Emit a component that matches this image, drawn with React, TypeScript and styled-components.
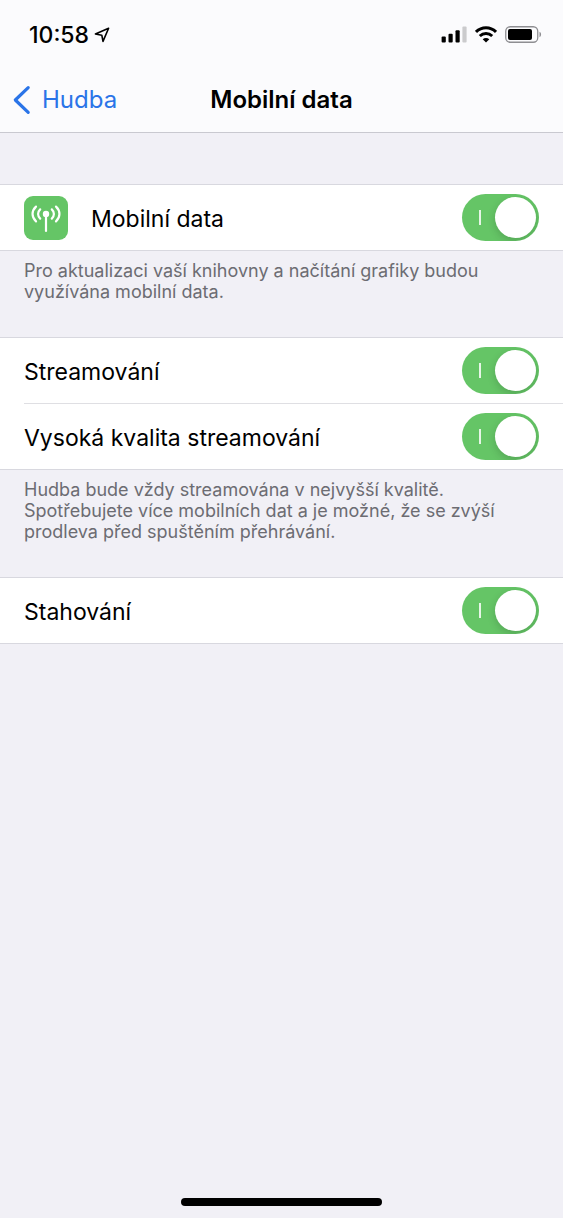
import React, { useId, useState } from "react";
import styled, { createGlobalStyle } from "styled-components";

const GlobalStyle = createGlobalStyle`
  * { box-sizing: border-box; }
  body {
    margin: 0;
    background: #f1f0f6;
    color: #000;
    font-family: Inter, "Liberation Sans", sans-serif;
  }
`;

const Screen = styled.div`
  display: flex;
  flex-direction: column;
  min-height: 100vh;
`;

const Header = styled.header`
  background: #fbfbfd;
  border-bottom: 1px solid #c9c9d0;
`;

const StatusBar = styled.div`
  display: flex;
  align-items: center;
  justify-content: space-between;
  height: 66px;
  padding: 3px 21px 0 29px;
`;

const Clock = styled.div`
  display: flex;
  align-items: center;
  gap: 5px;
  font-size: 23px;
  font-weight: 500;
  line-height: 28px;
`;

const Indicators = styled.div`
  display: flex;
  align-items: center;
  gap: 8px;
`;

const NavBar = styled.nav`
  display: grid;
  grid-template-columns: 1fr auto 1fr;
  align-items: center;
  height: 66px;
  padding: 1px 12px 0;
`;

const BackLink = styled.a`
  display: flex;
  align-items: center;
  gap: 10px;
  color: #2a74e8;
  font-size: 24px;
  line-height: 30px;
  text-decoration: none;
`;

const Title = styled.h1`
  margin: 0;
  font-size: 24px;
  font-weight: 600;
  line-height: 30px;
`;

const Main = styled.main`
  padding-top: 51px;
`;

const Group = styled.section`
  border-top: 1px solid #d8d8df;
  border-bottom: 1px solid #d8d8df;
  background: #fff;
`;

const Row = styled.div`
  display: flex;
  align-items: center;
  height: 65px;
  padding-right: 24px;
  margin-left: 24px;

  & + & {
    height: 66px;
    border-top: 1px solid #dfdfe3;
  }
`;

const AppIcon = styled.span`
  display: flex;
  width: 44px;
  height: 44px;
  margin-right: 23px;
  border-radius: 9px;
  background: #65c566;
`;

const RowLabel = styled.label`
  flex: 1;
  padding-top: 2px;
  font-size: 23px;
  line-height: 30px;
`;

const Switch = styled.input`
  appearance: none;
  display: flex;
  align-items: center;
  justify-content: space-between;
  width: 77px;
  height: 47px;
  margin: 0;
  padding: 0 3px 0 17px;
  overflow: hidden;
  border-radius: 24px;
  background: #d9d9de;
  cursor: pointer;

  &::before {
    content: "";
    width: 2px;
    height: 15px;
    background: #e6f5e6;
  }

  &::after {
    content: "";
    width: 41px;
    height: 41px;
    border-radius: 50%;
    background: #fff;
    box-shadow: 0 3px 8px rgba(0, 0, 0, 0.16);
  }

  &:checked {
    background: #65c566;
  }

  &:not(:checked) {
    flex-direction: row-reverse;
    padding: 0 17px 0 3px;
  }
`;

const Footnote = styled.p`
  margin: 0;
  padding: 9px 24px 35px;
  color: #6c6c72;
  font-size: 18px;
  line-height: 21px;
`;

const Line = styled.span`
  display: block;
`;

const HomeArea = styled.div`
  display: flex;
  justify-content: center;
  margin-top: auto;
  padding: 24px 0 12px;
`;

const HomeBar = styled.div`
  width: 201px;
  height: 8px;
  border-radius: 4px;
  background: #000;
`;

function LocationIcon() {
  return (
    <svg width="16" height="16" viewBox="0 0 16 16" fill="none" stroke="#000" strokeWidth="1.6" strokeLinejoin="round" aria-hidden="true">
      <path d="M14.6 1.3 L1.4 7 L7.8 8.2 L9 14.4 Z" />
    </svg>
  );
}

function SignalIcon() {
  return (
    <svg width="26" height="17" viewBox="0 0 26 17" aria-hidden="true">
      <rect x="0.6" y="10.6" width="4.2" height="6" rx="1" />
      <rect x="7.5" y="7.8" width="4.2" height="8.8" rx="1" />
      <rect x="14.5" y="4.2" width="4.2" height="12.4" rx="1" />
      <rect x="21.4" y="0.6" width="4.2" height="16" rx="1" fill="#cbcbcd" />
    </svg>
  );
}

function WifiIcon() {
  return (
    <svg width="22" height="17" viewBox="0 0 22 17" fill="none" stroke="#000" strokeWidth="3" aria-hidden="true">
      <path d="M1 5.9 C6.7 0.3 15.3 0.3 21 5.9" />
      <path d="M4.8 10 C8.4 6.6 13.6 6.6 17.2 10" />
      <path d="M11 16.5 L7.7 13.3 C9.6 11.6 12.4 11.6 14.3 13.3 Z" fill="#000" stroke="none" />
    </svg>
  );
}

function BatteryIcon() {
  return (
    <svg width="37" height="17" viewBox="0 0 37 17" aria-hidden="true">
      <rect x="0.75" y="0.75" width="32" height="15.5" rx="4.5" fill="none" stroke="#8e8e92" strokeWidth="1.3" />
      <rect x="3" y="3" width="24" height="11" rx="2" />
      <path d="M34.5 5.8 C36.6 6.7 36.6 10.3 34.5 11.2 Z" fill="#8e8e92" />
    </svg>
  );
}

function BackIcon() {
  return (
    <svg width="20" height="30" viewBox="0 0 20 30" fill="none" stroke="currentColor" strokeWidth="3.2" strokeLinecap="round" strokeLinejoin="round" aria-hidden="true">
      <path d="M16.2 2.7 L3.3 15 L16.2 27.3" />
    </svg>
  );
}

function AntennaIcon() {
  return (
    <svg width="44" height="44" viewBox="0 0 44 44" fill="none" stroke="#fff" strokeWidth="2.2" strokeLinecap="round" aria-hidden="true">
      <circle cx="22" cy="18" r="3.2" fill="#fff" stroke="none" />
      <path d="M22 19 V35" />
      <path d="M16.2 13.4 C13.4 16.2 13.4 19.8 16.2 22.6" />
      <path d="M27.8 13.4 C30.6 16.2 30.6 19.8 27.8 22.6" />
      <path d="M12 10.6 C7.4 15 7.4 21 12 25.4" />
      <path d="M32 10.6 C36.6 15 36.6 21 32 25.4" />
    </svg>
  );
}

function SettingRow({ label, icon }: { label: string; icon?: React.ReactNode }) {
  const id = useId();
  const [on, setOn] = useState(true);
  return (
    <Row>
      {icon && <AppIcon>{icon}</AppIcon>}
      <RowLabel htmlFor={id}>{label}</RowLabel>
      <Switch id={id} type="checkbox" role="switch" checked={on} onChange={(e) => setOn(e.target.checked)} />
    </Row>
  );
}

export default function App() {
  return (
    <>
      <GlobalStyle />
      <Screen>
        <Header>
          <StatusBar>
            <Clock>
              <span>10:58</span>
              <LocationIcon />
            </Clock>
            <Indicators>
              <SignalIcon />
              <WifiIcon />
              <BatteryIcon />
            </Indicators>
          </StatusBar>
          <NavBar>
            <BackLink href="#hudba">
              <BackIcon />
              Hudba
            </BackLink>
            <Title>Mobilní data</Title>
          </NavBar>
        </Header>
        <Main>
          <Group>
            <SettingRow label="Mobilní data" icon={<AntennaIcon />} />
          </Group>
          <Footnote>
            <Line>Pro aktualizaci vaší knihovny a načítání grafiky budou</Line>
            <Line>využívána mobilní data.</Line>
          </Footnote>
          <Group>
            <SettingRow label="Streamování" />
            <SettingRow label="Vysoká kvalita streamování" />
          </Group>
          <Footnote>
            <Line>Hudba bude vždy streamována v nejvyšší kvalitě.</Line>
            <Line>Spotřebujete více mobilních dat a je možné, že se zvýší</Line>
            <Line>prodleva před spuštěním přehrávání.</Line>
          </Footnote>
          <Group>
            <SettingRow label="Stahování" />
          </Group>
        </Main>
        <HomeArea>
          <HomeBar />
        </HomeArea>
      </Screen>
    </>
  );
}
